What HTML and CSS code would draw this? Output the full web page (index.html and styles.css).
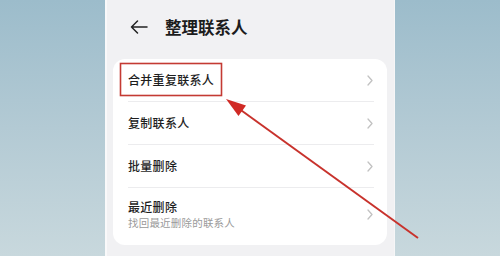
FILE: index.html
```html
<!DOCTYPE html>
<html lang="zh-CN">
<head>
<meta charset="utf-8">
<link rel="stylesheet" href="styles.css">
</head>
<body>
<div class="stage">
  <div class="phone">
    <div class="header">
      <svg class="back" width="18" height="14" viewBox="0 0 18 14"><path d="M17 7H1.5M7.5 1L1.5 7l6 6" fill="none" stroke="#222" stroke-width="1.5" stroke-linecap="round" stroke-linejoin="round"/></svg>
      <div class="title">整理联系人</div>
    </div>
    <div class="card">
      <div class="row">
        <div class="label"><div class="name">合并重复联系人</div></div>
        <svg class="chev" width="6" height="11" viewBox="0 0 6 11"><path d="M1 1l4 4.5L1 10" fill="none" stroke="#c2c2c2" stroke-width="1.3" stroke-linecap="round" stroke-linejoin="round"/></svg>
      </div>
      <div class="row">
        <div class="label"><div class="name">复制联系人</div></div>
        <svg class="chev" width="6" height="11" viewBox="0 0 6 11"><path d="M1 1l4 4.5L1 10" fill="none" stroke="#c2c2c2" stroke-width="1.3" stroke-linecap="round" stroke-linejoin="round"/></svg>
      </div>
      <div class="row">
        <div class="label"><div class="name">批量删除</div></div>
        <svg class="chev" width="6" height="11" viewBox="0 0 6 11"><path d="M1 1l4 4.5L1 10" fill="none" stroke="#c2c2c2" stroke-width="1.3" stroke-linecap="round" stroke-linejoin="round"/></svg>
      </div>
      <div class="row row-tall">
        <div class="label">
          <div class="name">最近删除</div>
          <div class="sub">找回最近删除的联系人</div>
        </div>
        <svg class="chev" width="6" height="11" viewBox="0 0 6 11"><path d="M1 1l4 4.5L1 10" fill="none" stroke="#c2c2c2" stroke-width="1.3" stroke-linecap="round" stroke-linejoin="round"/></svg>
      </div>
    </div>
  </div>
  <svg class="annot" width="500" height="256" viewBox="0 0 500 256">
    <rect x="120.5" y="63.5" width="101" height="32" fill="none" stroke="#c43a33" stroke-width="1.6"/>
    <line x1="418" y1="238" x2="238" y2="108" stroke="#c8322c" stroke-width="2"/>
    <polygon points="226,99 246,105.5 238.5,116" fill="#d02a25"/>
  </svg>
</div>
</body>
</html>
```

FILE: styles.css
```css
* { box-sizing: border-box; }
html, body { margin: 0; padding: 0; }
body {
  width: 500px;
  height: 256px;
  overflow: hidden;
  font-family: "Noto Sans CJK SC", "Noto Sans", sans-serif;
}
.stage {
  position: relative;
  width: 500px;
  height: 256px;
  background: linear-gradient(180deg, #9cbccb 0%, #b3cad4 50%, #c8d8dd 100%);
  display: flex;
  justify-content: center;
}
.phone {
  width: 290px;
  height: 256px;
  background: #f1f1f3;
  border-left: 2px solid #f9f9fa;
  border-right: 1px solid #f6f6f7;
  display: flex;
  flex-direction: column;
}
.header {
  height: 54px;
  display: flex;
  align-items: center;
  padding-left: 23px;
  gap: 17px;
}
.back { display: block; }
.title {
  font-size: 16.5px;
  font-weight: 700;
  color: #1c1c1c;
}
.card {
  margin: 5px 7px 0 6px;
  background: #fff;
  border-radius: 12px;
  padding: 0 13px 0 15px;
}
.row {
  height: 43px;
  display: flex;
  align-items: center;
  justify-content: space-between;
  border-bottom: 1px solid #ececee;
}
.row-tall {
  height: 57px;
  border-bottom: none;
  padding-bottom: 4px;
}
.name {
  font-size: 12px;
  font-weight: 500;
  color: #1e1e1e;
  letter-spacing: 0.3px;
  line-height: 16px;
}
.sub {
  font-size: 10.5px;
  color: #9a9a9a;
  line-height: 16px;
  letter-spacing: 0.2px;
}
.chev { display: block; margin-right: 1px; }
.annot {
  position: absolute;
  left: 0;
  top: 0;
}
```
